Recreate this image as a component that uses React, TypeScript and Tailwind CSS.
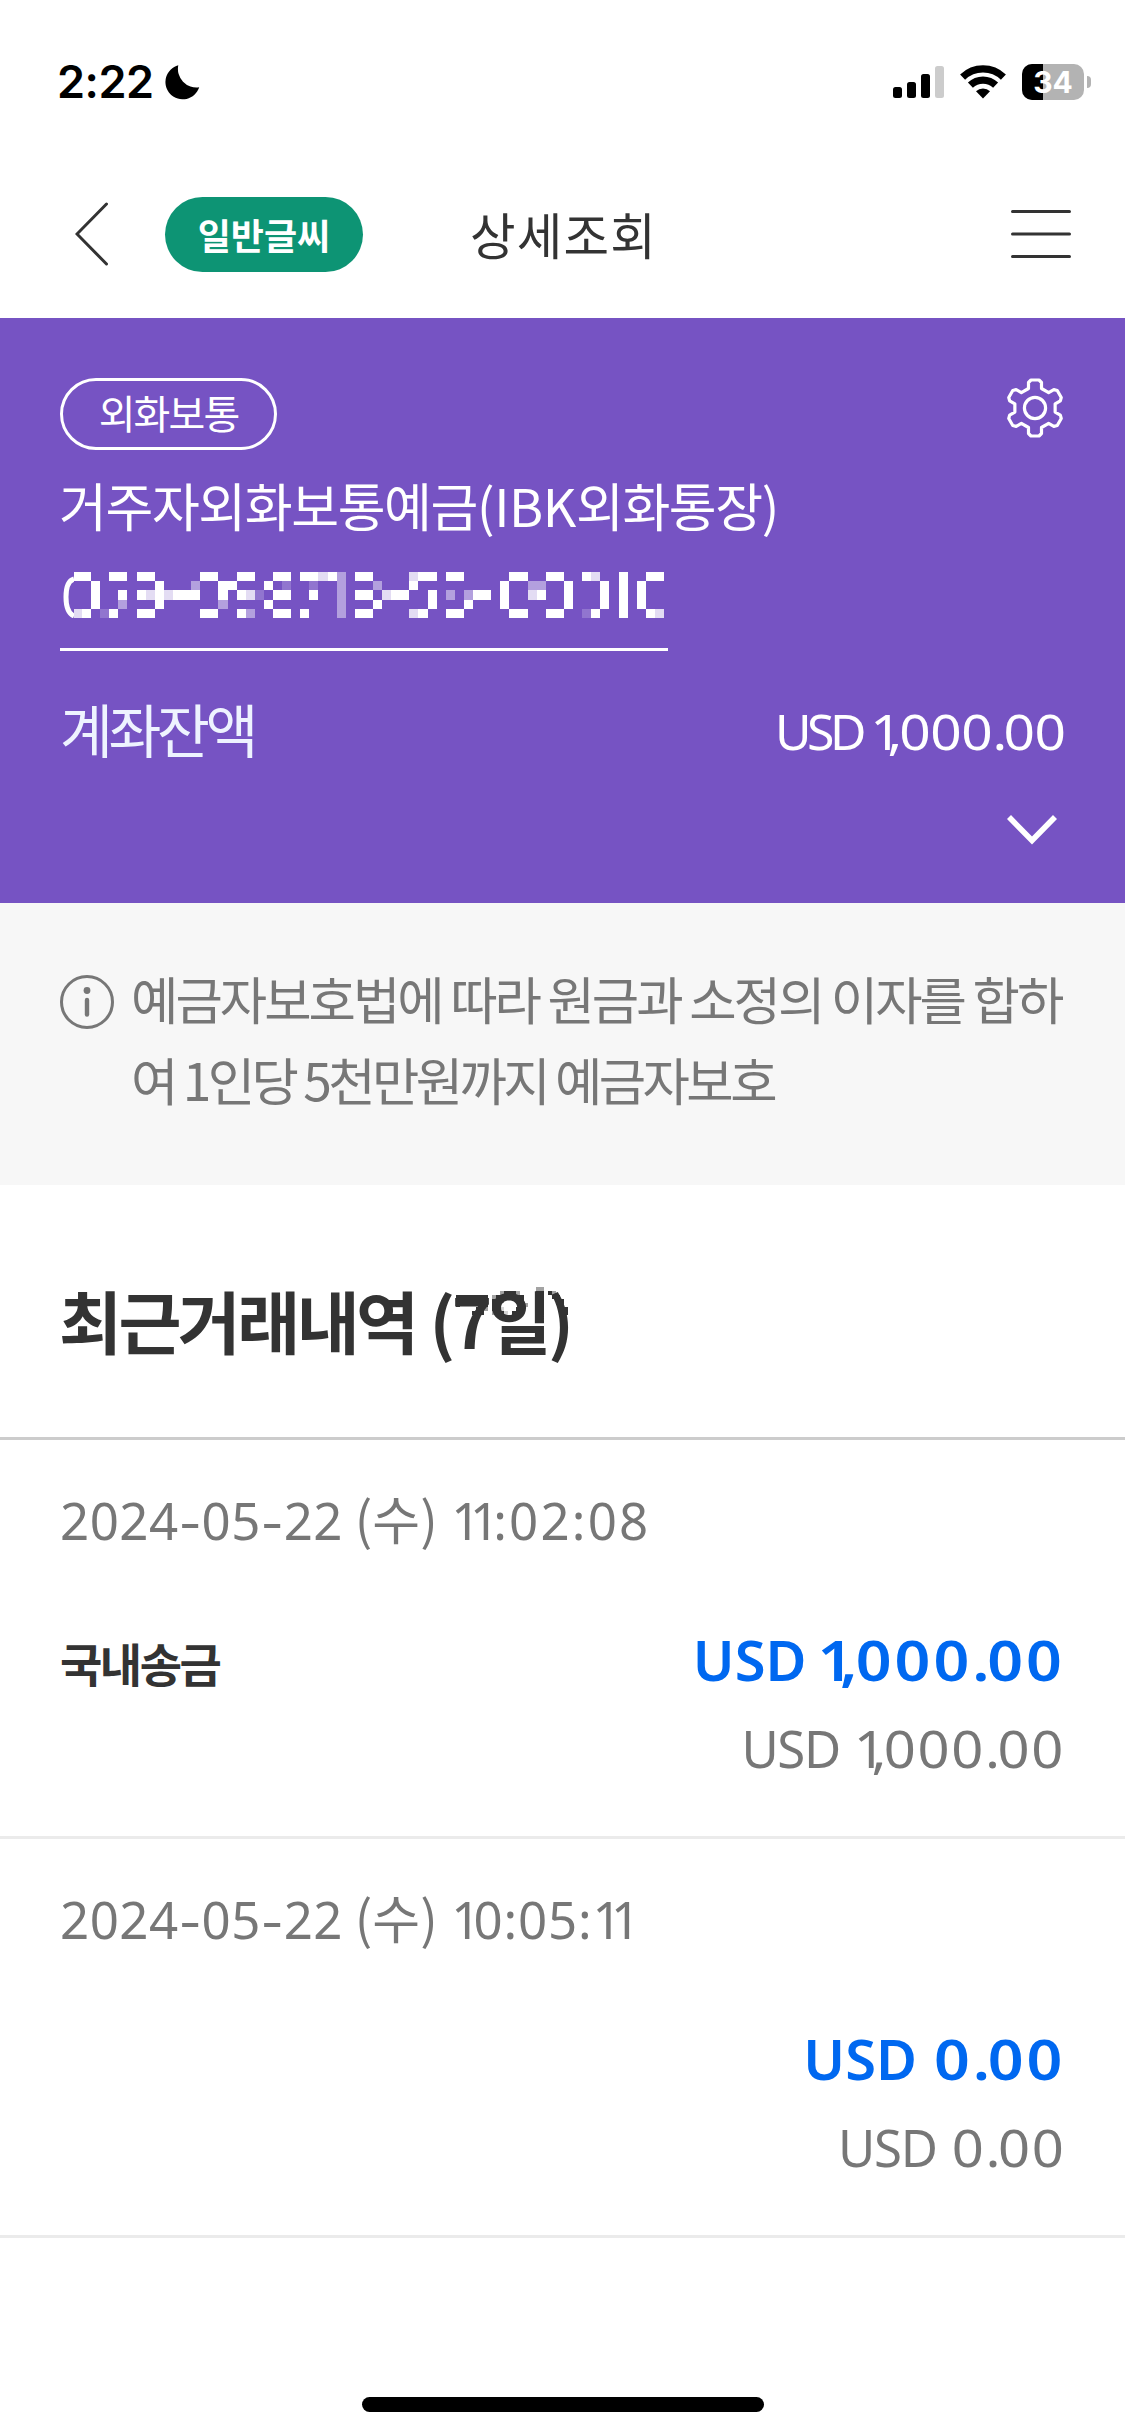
import type { ReactNode } from 'react';

const KR = "font-['Noto_Sans_CJK_KR','Noto_Sans',sans-serif]";
const LATIN = "font-['Noto_Sans','Noto_Sans_CJK_KR',sans-serif]";

/* Mosaic over the account number: W solid, l light, m medium, d dim */
const MASK = [
  'W..WW.WW.....WW..WW..WW.WWlWm.WW....lWW.WW.....WW..WW..Wl..W..WW',
  '.W......W...m..WW...W.d..d..m...m...W.........W..mm..W...W.W.W..',
  '.W..W.WlWlWWW..W.Wld.WW..W..m.WW.lWW..W.m.mWW.W..lW..W...W.W.W..',
  '.W..m...W......m....W.......m...W.....W...W...W......W...W.W.W..',
  'W.dW..WW.....WW..Wm..WW.W...m.WW....lW..WW.....WW..WW..dW..W..Wl',
];
const MASK_OPACITY: Record<string, number> = { W: 1, l: 0.8, m: 0.45, d: 0.2 };

/* Jagged upper edge of the "(7일)" part of the title */
const TITLE_MASK = [
  '....................mm......',
  '...........mWWWm....WW.Wm...',
  'WWWWWWWW.mWWWWWWW...WW..WW..',
  'WWWWWWWW.WWm...WW...WW...WW.',
  'W.....WW.WW.....Wm..WW....W.',
  '.....WWm.WWd...WW...WW....WW',
  '....WWW..mWWd.WWW...WW....WW',
];

function Mosaic({ rows, cw, ch, className }: { rows: string[]; cw: number; ch: number; className: string }) {
  return (
    <svg
      className={className}
      viewBox={`0 0 ${rows[0].length * cw} ${rows.length * ch}`}
      preserveAspectRatio="none"
      shapeRendering="crispEdges"
      fill="currentColor"
    >
      {rows.flatMap((row, y) =>
        [...row].map((c, x) =>
          c === '.' ? null : (
            <rect key={`${x}-${y}`} x={x * cw} y={y * ch} width={cw} height={ch} opacity={MASK_OPACITY[c]} />
          ),
        ),
      )}
    </svg>
  );
}

function gearPath() {
  const pts: [number, number][] = [];
  for (let k = 0; k < 6; k++) {
    const a = (k * Math.PI) / 3;
    const rot = (x: number, y: number): [number, number] => [
      x * Math.cos(a) - y * Math.sin(a),
      x * Math.sin(a) + y * Math.cos(a),
    ];
    pts.push(rot(-6.5, -19.5), rot(-6.5, -25.5), rot(-4, -28), rot(4, -28), rot(6.5, -25.5), rot(6.5, -19.5));
  }
  return 'M' + pts.map((p) => p.map((n) => n.toFixed(2)).join(' ')).join('L') + 'Z';
}

function StatusBar() {
  return (
    <div className="flex h-[150px] items-center justify-between pt-[14px] pr-[34px] pl-[57px]">
      <div className="flex items-center gap-[12px]">
        <span className="font-['Inter',sans-serif] text-[45px] font-semibold tracking-[-0.5px] text-black">2:22</span>
        <svg className="h-[35px] w-[35px]" viewBox="0 0 35 35">
          <path d="M13.3 .3A17.3 17.3 0 1 0 34.2 22.3A18.5 18.5 0 0 1 13.3 .3Z" />
        </svg>
      </div>
      <div className="flex items-center">
        <svg className="h-[32px] w-[51px]" viewBox="0 0 51 32">
          <rect x="0" y="21" width="9" height="11" rx="2.5" />
          <rect x="14" y="16" width="9" height="16" rx="2.5" />
          <rect x="28" y="8" width="9" height="24" rx="2.5" />
          <rect x="42" y="0" width="9" height="32" rx="2.5" fill="#cccccc" />
        </svg>
        <svg className="ml-4 h-[34px] w-[46px]" viewBox="0 0 46 34">
          <g fill="none" stroke="#000" strokeWidth="7.2">
            <path d="M2.6 12.2A29.4 29.4 0 0 1 43.4 12.2" />
            <path d="M10.4 20.2A18.2 18.2 0 0 1 35.6 20.2" />
          </g>
          <path d="M23 33.5L16 26.3A10 10 0 0 1 30 26.3Z" />
        </svg>
        <div className="relative ml-4 flex h-9 w-[62px] items-center justify-center overflow-hidden rounded-[10px] bg-[#b3b3b3]">
          <div className="absolute inset-y-0 left-0 w-[21px] bg-black" />
          <span className="relative -mt-[1px] font-['Inter',sans-serif] text-[30px] leading-none font-bold text-white">34</span>
        </div>
        <div className="ml-[3px] h-3 w-1 rounded-r-full bg-[#b3b3b3]" />
      </div>
    </div>
  );
}

function Header() {
  return (
    <div className="flex h-[168px] items-center justify-between pr-[54px] pl-[75px]">
      <div className="flex items-center">
        <svg className="h-[64px] w-[34px]" viewBox="0 0 34 64" fill="none" stroke="#333" strokeWidth="3" strokeLinecap="round">
          <path d="M31.5 2L2 32L31.5 62" />
        </svg>
        <div className="ml-14 flex h-[75px] w-[198px] items-center justify-center rounded-full bg-[#0d9474]">
          <span className={`${KR} text-[36px] leading-none font-bold text-white`}>일반글씨</span>
        </div>
        <h1 className={`${KR} ml-[107px] text-[49.5px] leading-none tracking-[1.2px] text-[#333]`}>상세조회</h1>
      </div>
      <svg className="h-[50px] w-[60px]" viewBox="0 0 60 50" stroke="#333" strokeWidth="3" strokeLinecap="round">
        <path d="M1.5 2.5H58.5M1.5 25H58.5M1.5 47.5H58.5" />
      </svg>
    </div>
  );
}

/* Splits an amount so that "1," and "." sit tighter than the zeros */
function Figures({ text, className, one, comma, dot }: { text: string; className: string; one: string; comma: string; dot: string }) {
  const styles: Record<string, string> = { '1': one, ',': comma, '.': dot };
  return (
    <span className={className}>
      {text.split(/([1,.])/).map((part, i) =>
        styles[part] ? (
          <span key={i} className={styles[part]}>{part}</span>
        ) : (
          part
        ),
      )}
    </span>
  );
}

function Account() {
  return (
    <section className="h-[585px] bg-[#7653c3] px-[60px] pt-[60px] text-white">
      <div className="flex items-start justify-between">
        <div className="flex h-[72px] w-[217px] items-center justify-center rounded-[36px] border-3 border-white pb-[5px]">
          <span className={`${KR} text-[40px] leading-none tracking-[-1.9px]`}>외화보통</span>
        </div>
        <svg className="mr-[2px] h-[60px] w-[56px]" viewBox="-28 -30 56 60" fill="none" stroke="#fff" strokeWidth="3.2" strokeLinejoin="round">
          <path d={gearPath()} />
          <circle r="10.6" />
        </svg>
      </div>
      <div className={`${KR} mt-[25px] -ml-[1px] text-[52px] leading-[60px] tracking-[-1.4px] whitespace-nowrap`}>
        거주자외화보통예금<span className="tracking-[-0.4px]">(IBK</span>외화통장)
      </div>
      <div className="mt-[37px] flex w-[608px] border-b-3 border-white pb-[30px]">
        <svg className="ml-[3px] h-[46px] w-[11px]" viewBox="0 0 11 46" fill="none" stroke="#fff" strokeWidth="5">
          <path d="M11 7C4 9 3 17 3 25S4 41 11 44" />
        </svg>
        <svg className="h-[46px] w-[8px]" viewBox="0 0 8 46" fill="#fff">
          <rect width="8" height="9" />
          <rect y="37" width="8" height="9" opacity=".8" />
        </svg>
        <Mosaic rows={MASK} cw={9.1} ch={9.2} className="h-[46px] w-[582px]" />
      </div>
      <div className="mt-[41px] flex h-[70px] items-center justify-between">
        <span className={`${KR} mt-[3px] text-[57.5px] leading-none tracking-[-4.4px] text-[#eef3ff]`}>계좌잔액</span>
        <div className={`${LATIN} mt-[7px] flex text-[50px] leading-none whitespace-pre`}>
          <span className="tracking-[-4.5px]">USD </span>
          <Figures text="1,000.00" className="ml-[17px] origin-right scale-x-110 tracking-[-0.4px]" one="tracking-[-13px]" comma="tracking-[-2.6px]" dot="tracking-[-3.4px]" />
        </div>
      </div>
      <div className="mt-[53px] flex justify-end pr-[8px]">
        <svg className="h-[30px] w-[50px]" viewBox="0 0 50 30" fill="none" stroke="#fff" strokeWidth="5.6">
          <path d="M2 2L25 25.5L48 2" />
        </svg>
      </div>
    </section>
  );
}

function Notice() {
  return (
    <section className="flex h-[282px] gap-[17px] bg-[#f7f7f7] pt-[54px] pl-[60px] text-[#777]">
      <svg className="mt-[18px] h-[54px] w-[54px] shrink-0" viewBox="0 0 54 54" fill="none" stroke="#777" strokeWidth="3">
        <circle cx="27" cy="27" r="25.5" />
        <circle cx="27" cy="15.5" r="3.4" fill="#777" stroke="none" />
        <path d="M27 25V39.5" strokeWidth="4.4" strokeLinecap="round" />
      </svg>
      <p className={`${KR} text-[51.5px] leading-[81px] whitespace-nowrap`}>
        <span className="tracking-[-3px]">예금자보호법에 따라 원금과 소정의 이자를 합하</span>
        <br />
        <span className="tracking-[-3.6px]">여 1인당 5천만원까지 예금자보호</span>
      </p>
    </section>
  );
}

function Transaction({ day, weekday, time, label, amount, short }: {
  day: string; weekday: string; time: ReactNode; label?: string; amount: string; short?: boolean;
}) {
  return (
    <li className="h-[399px] border-b-3 border-[#ebebeb] pt-[50px] pl-[60px] text-[#777]">
      <div className={`${LATIN} h-[60px] text-[51px] leading-[60px] tracking-[0.5px] whitespace-pre`}>
        {day.split('-').map((part, i) => (
          <span key={i}>
            {i > 0 && <span className="mx-[3.2px] inline-block scale-x-130 leading-none tracking-normal">-</span>}
            {part}
          </span>
        ))}
        <span className={`${KR} mr-[2px] text-[52px] leading-[0] tracking-normal`}> ({weekday}) </span>
        {time}
      </div>
      <div className="mt-[69px] flex justify-between">
        <span className={`${KR} mt-[3px] text-[46px] leading-[80px] font-bold tracking-[-2.5px] text-[#333]`}>{label}</span>
        <div className={`${LATIN} flex flex-col items-end gap-[9px] pr-[60px] leading-[80px] whitespace-pre`}>
          <div className="flex text-[56px] font-semibold text-[#0068f0]">
            <span>USD </span>
            <Figures text={amount} className={`${short ? 'ml-[16px]' : 'ml-[23px]'} origin-right scale-x-112 tracking-[2.7px]`} one="tracking-[-12px]" comma="tracking-[-1.6px]" dot="tracking-[-2.2px]" />
          </div>
          <div className="flex text-[51px]">
            <span className="tracking-[-1.3px]">USD </span>
            <Figures text={amount} className={`${short ? 'ml-[13px]' : 'ml-[21px]'} origin-right scale-x-110 tracking-[1.5px]`} one="tracking-[-13px]" comma="tracking-[-2.6px]" dot="tracking-[-2.3px]" />
          </div>
        </div>
      </div>
    </li>
  );
}

export default function App() {
  return (
    <main className="h-[2436px] w-[1125px] overflow-hidden bg-white">
      <StatusBar />
      <Header />
      <Account />
      <Notice />
      <div className="flex h-[255px] items-center border-b-3 border-[#ccc] pt-[18px] pl-[59px]">
        <h2 className={`${KR} relative text-[68.5px] leading-none font-bold tracking-[-3.6px] whitespace-nowrap text-[#333]`}>
          최근거래내역 <span className="ml-[2px]">(7일)</span>
          <Mosaic rows={TITLE_MASK} cw={4} ch={4} className="absolute top-[1px] left-[397px] h-[28px] w-[112px]" />
        </h2>
      </div>
      <ul>
        <Transaction
          day="2024-05-22"
          weekday="수"
          time={<><span className="tracking-[-10.5px]">1</span><span className="tracking-[-6px]">1</span><span className="tracking-[2.2px]">:02:08</span></>}
          label="국내송금"
          amount="1,000.00"
        />
        <Transaction
          day="2024-05-22"
          weekday="수"
          time={<><span className="tracking-[-7px]">1</span><span className="tracking-[0.8px]">0:05:</span><span className="tracking-[-10.5px]">1</span>1</>}
          amount="0.00"
          short
        />
      </ul>
      <div className="mx-auto mt-[159px] h-[15px] w-[402px] rounded-full bg-black" />
    </main>
  );
}
